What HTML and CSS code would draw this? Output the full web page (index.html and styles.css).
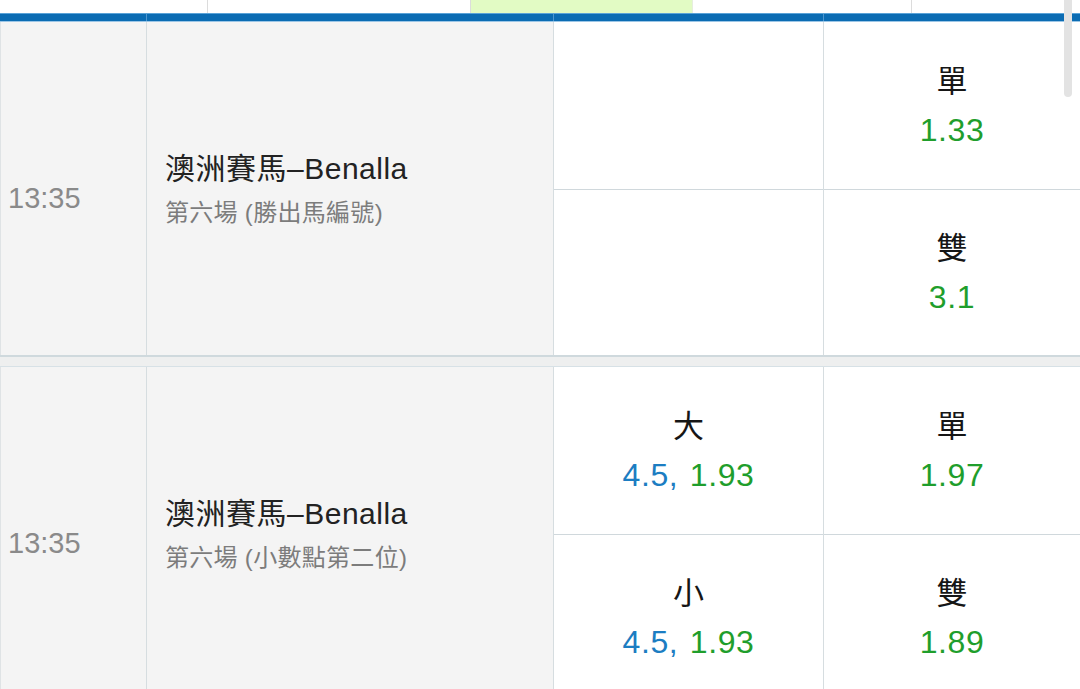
FILE: index.html
```html
<!DOCTYPE html>
<html lang="zh-Hant">
<head>
<meta charset="utf-8">
<link rel="stylesheet" href="styles.css">
</head>
<body>
<div class="page">
  <div class="top-strip">
    <div class="ts ts1"></div>
    <div class="ts ts2"></div>
    <div class="ts ts3"></div>
    <div class="ts ts4"></div>
    <div class="ts ts5"></div>
  </div>
  <div class="head-bar">
    <div class="hb"></div>
    <div class="hb"></div>
    <div class="hb"></div>
    <div class="hb"></div>
  </div>

  <div class="event">
    <div class="c-time"><span class="time">13:35</span></div>
    <div class="c-name">
      <div class="title">澳洲賽馬–Benalla</div>
      <div class="sub">第六場 (勝出馬編號)</div>
    </div>
    <div class="c-odds">
      <div class="cell"></div>
      <div class="cell"></div>
    </div>
    <div class="c-odds">
      <div class="cell">
        <div class="lbl">單</div>
        <div class="odd"><span class="green">1.33</span></div>
      </div>
      <div class="cell">
        <div class="lbl">雙</div>
        <div class="odd"><span class="green">3.1</span></div>
      </div>
    </div>
  </div>

  <div class="sep"></div>

  <div class="event">
    <div class="c-time"><span class="time">13:35</span></div>
    <div class="c-name">
      <div class="title">澳洲賽馬–Benalla</div>
      <div class="sub">第六場 (小數點第二位)</div>
    </div>
    <div class="c-odds">
      <div class="cell">
        <div class="lbl">大</div>
        <div class="odd"><span class="blue">4.5, </span><span class="green">1.93</span></div>
      </div>
      <div class="cell">
        <div class="lbl">小</div>
        <div class="odd"><span class="blue">4.5, </span><span class="green">1.93</span></div>
      </div>
    </div>
    <div class="c-odds">
      <div class="cell">
        <div class="lbl">單</div>
        <div class="odd"><span class="green">1.97</span></div>
      </div>
      <div class="cell">
        <div class="lbl">雙</div>
        <div class="odd"><span class="green">1.89</span></div>
      </div>
    </div>
  </div>

  <div class="scrollbar"></div>
</div>
</body>
</html>
```

FILE: styles.css
```css
* { box-sizing: border-box; }
html, body {
  margin: 0;
  padding: 0;
  background: #ffffff;
  overflow: hidden;
}
body {
  font-family: "Liberation Sans", "Noto Sans CJK TC", sans-serif;
  width: 1080px;
  height: 689px;
}
.page {
  position: relative;
  width: 1080px;
  height: 689px;
  overflow: hidden;
}

/* top strip */
.top-strip {
  display: grid;
  grid-template-columns: 208px 263px 222px 219px 1fr;
  height: 13px;
  background: #ffffff;
}
.ts { border-right: 1px solid #dcdcdc; }
.ts3 { background: #e2fbc4; border-right: 1px solid #e6eede; }
.ts5 { border-right: none; }

/* blue header bar */
.head-bar {
  display: grid;
  grid-template-columns: 146px 407px 270px 1fr;
  height: 9px;
  background: #0b6cb3;
  border-top: 1px solid #5aa3d8;
  border-bottom: 1px solid #9cc6e6;
}
.hb { border-left: 1px solid #4f97cf; }
.hb:first-child { border-left: none; }

/* event rows */
.event {
  display: grid;
  grid-template-columns: 146px 407px 270px 1fr;
  height: 333px;
}
.c-time {
  background: #f4f4f4;
  border-left: 1px solid #dfe3e5;
  display: flex;
  align-items: center;
  padding-left: 7px;
  padding-top: 19px;
}
.time {
  font-size: 29px;
  color: #8a8a8a;
}
.c-name {
  background: #f4f4f4;
  border-left: 1px solid #d6dde0;
  display: flex;
  flex-direction: column;
  justify-content: center;
  padding-left: 18px;
}
.title {
  font-size: 30px;
  line-height: 48px;
  color: #222222;
  letter-spacing: 0.5px;
}
.sub {
  font-size: 24px;
  line-height: 40px;
  color: #7c7c7c;
  letter-spacing: 0.3px;
}
.c-odds {
  border-left: 1px solid #d6dde0;
  display: grid;
  grid-template-rows: 167px 166px;
  background: #ffffff;
}
.cell {
  display: flex;
  flex-direction: column;
  align-items: center;
  justify-content: center;
}
.cell + .cell { border-top: 1px solid #d0d8dc; }
.lbl {
  font-size: 31px;
  line-height: 48px;
  color: #161616;
}
.odd {
  font-size: 32px;
  line-height: 48px;
  letter-spacing: 0.6px;
  word-spacing: 2px;
}
.green { color: #1f9e2c; }
.blue { color: #1c7dc2; }

/* separator between events */
.sep {
  height: 12px;
  background: #eeefef;
  border-top: 2px solid #cfd9dd;
  border-bottom: 1px solid #d7e1e6;
}

/* scrollbar overlay */
.scrollbar {
  position: absolute;
  left: 1064px;
  top: 0;
  width: 8px;
  height: 97px;
  border-radius: 0 0 4px 4px;
  background: #e3e3e3;
}
```
